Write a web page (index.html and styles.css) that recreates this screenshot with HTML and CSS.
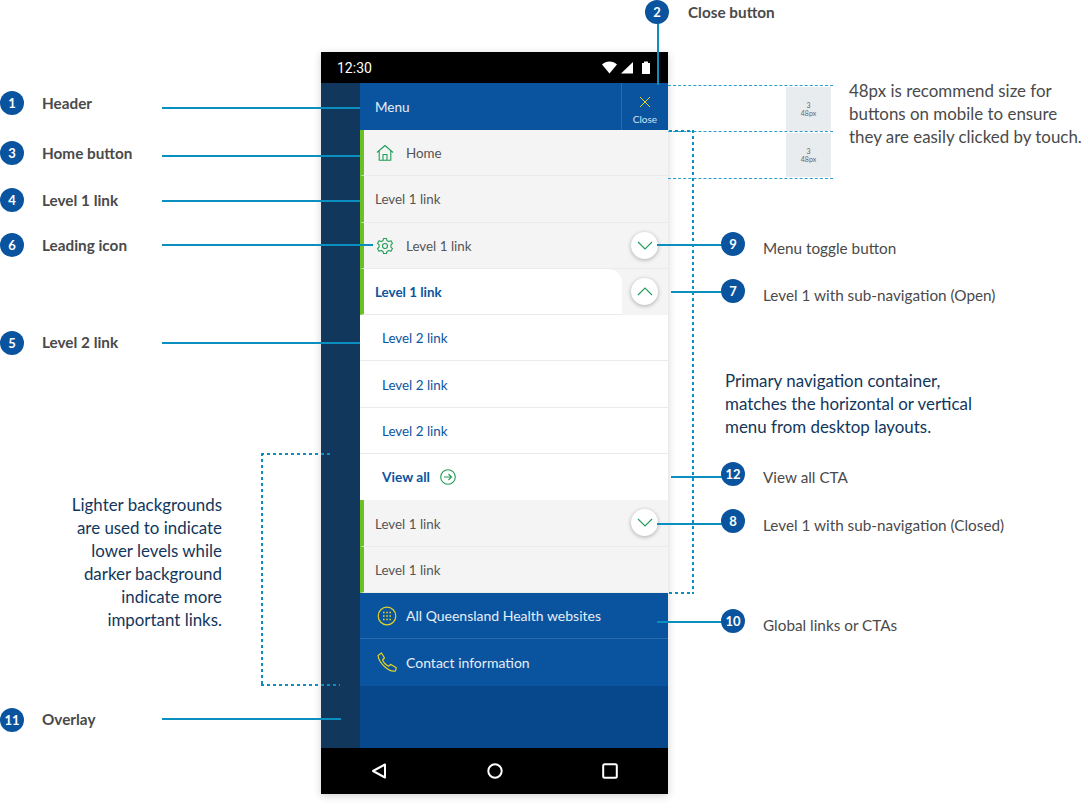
FILE: index.html
```html
<!DOCTYPE html>
<html lang="en">
<head>
    <meta charset="UTF-8">
    <title>Mobile navigation anatomy</title>
    <link rel="stylesheet" href="styles.css">
</head>
<body>
    <div class="canvas">
        <!-- phone -->
        <div class="phone">
            <div class="status-bar">
                <span class="time">12:30</span>
                <svg class="status-icons" width="52" height="14" viewBox="0 0 52 14">
                    <path d="M0 3.500C4-.6 11-.6 15 3.500L7.500 12.500Z" fill="#fff"/>
                    <path d="M19 12.500L31 1V12.500Z" fill="#fff"/>
                    <path d="M40 2H42V0.500H46V2H48V13H40Z" fill="#fff"/>
                </svg>
            </div>
            <div class="screen">
                <div class="overlay"></div>
                <div class="drawer">
                    <div class="drawer-header">
                        <span class="menu-title">Menu</span>
                        <div class="close-btn">
                            <svg width="12" height="12" viewBox="0 0 12 12"><path d="M1 1L11 11M11 1L1 11" stroke="#e3d323" stroke-width="1" fill="none"/></svg>
                            <span>Close</span>
                        </div>
                    </div>
                    <nav class="menu">
                        <a class="row level1">
                            <svg class="lead" width="18" height="18" viewBox="0 0 18 18" fill="none" stroke="#1f9d57" stroke-width="1.100" stroke-linejoin="round"><path d="M1 8.500L9 1.500L17 8.500M3.200 7V16.300H14.800V7"/><path d="M7 16.300V10.500H11V16.300"/></svg>
                            Home
                        </a>
                        <a class="row level1">Level 1 link</a>
                        <a class="row level1">
                            <svg class="lead" width="18" height="18" viewBox="0 0 18 18" fill="none" stroke="#1f9d57" stroke-width="1.100" stroke-linejoin="round"><path d="M7.500 1.500H10.500L11 3.700L12.900 4.600L15 3.800L16.500 6.400L14.900 7.900V10.100L16.500 11.600L15 14.200L12.900 13.400L11 14.400L10.500 16.500H7.500L7 14.400L5.100 13.400L3 14.200L1.500 11.600L3.100 10.100V7.900L1.500 6.400L3 3.800L5.100 4.600L7 3.700Z"/><circle cx="9" cy="9" r="2.500"/></svg>
                            Level 1 link
                            <span class="toggle"><svg width="16" height="9" viewBox="0 0 16 9"><path d="M1 1L8 8L15 1" stroke="#1f9d57" stroke-width="1.100" fill="none"/></svg></span>
                        </a>
                        <div class="row-open">
                            <a class="row level1 open">Level 1 link</a>
                            <span class="toggle"><svg width="16" height="9" viewBox="0 0 16 9"><path d="M1 8L8 1L15 8" stroke="#1f9d57" stroke-width="1.100" fill="none"/></svg></span>
                        </div>
                        <a class="row level2">Level 2 link</a>
                        <a class="row level2">Level 2 link</a>
                        <a class="row level2">Level 2 link</a>
                        <a class="row level2 view-all">
                            View all
                            <svg width="16" height="16" viewBox="0 0 16 16" fill="none" stroke="#1f9d57" stroke-width="1.100"><circle cx="8" cy="8" r="7.300"/><path d="M4 8H11.500M8.500 5L11.500 8L8.500 11"/></svg>
                        </a>
                        <a class="row level1">
                            Level 1 link
                            <span class="toggle"><svg width="16" height="9" viewBox="0 0 16 9"><path d="M1 1L8 8L15 1" stroke="#1f9d57" stroke-width="1.100" fill="none"/></svg></span>
                        </a>
                        <a class="row level1">Level 1 link</a>
                    </nav>
                    <div class="global-links">
                        <a class="global-row">
                            <svg width="20" height="20" viewBox="0 0 20 20" fill="none" stroke="#e3d323"><circle cx="10" cy="10" r="8.800" stroke-width="1.200"/><path d="M6 6.500H14M6 10H14M6 13.500H14" stroke-width="1.600" stroke-dasharray="1.600 1.600"/></svg>
                            All Queensland Health websites
                        </a>
                        <a class="global-row">
                            <svg width="20" height="20" viewBox="0 0 20 20" fill="none" stroke="#e3d323" stroke-width="1.200" stroke-linejoin="round"><path d="M1 3.500L4.500 1L7.500 6L5.500 7.800C6.500 10.500 9 13 11.700 14.200L13.500 12.300L19.300 15.700L18.500 18.800C16 19.500 12 18.500 8 15C4 11.500 1.500 7.500 1 3.500Z"/></svg>
                            Contact information
                        </a>
                    </div>
                    <div class="drawer-fill"></div>
                </div>
            </div>
            <div class="nav-bar">
                <svg width="16" height="16" viewBox="0 0 16 16"><path d="M14 1.500V14.500L2 8Z" fill="none" stroke="#fff" stroke-width="2" stroke-linejoin="round"/></svg>
                <svg width="16" height="16" viewBox="0 0 16 16"><circle cx="8" cy="8" r="6.700" fill="none" stroke="#fff" stroke-width="2"/></svg>
                <svg width="16" height="16" viewBox="0 0 16 16"><rect x="1.200" y="1.200" width="13.600" height="13.600" rx="1.500" fill="none" stroke="#fff" stroke-width="2"/></svg>
            </div>
        </div>

        <!-- leader lines -->
        <div class="line h l-header"></div>
        <div class="line h l-home"></div>
        <div class="line h l-level1"></div>
        <div class="line h l-icon"></div>
        <div class="line h l-level2"></div>
        <div class="line h l-overlay"></div>
        <div class="line v l-close"></div>
        <div class="line h l-toggle"></div>
        <div class="line h l-open"></div>
        <div class="line h l-viewall"></div>
        <div class="line h l-closed"></div>
        <div class="line h l-global"></div>

        <!-- dashed guides -->
        <div class="guide g1"></div>
        <div class="guide g2"></div>
        <div class="guide g3"></div>
        <div class="size-box s1"><span>3</span><span>48px</span></div>
        <div class="size-box s2"><span>3</span><span>48px</span></div>
        <div class="bracket-right"></div>
        <div class="bracket-left"></div>

        <!-- numbered pins -->
        <span class="pin p1">1</span>
        <span class="pin p2">2</span>
        <span class="pin p3">3</span>
        <span class="pin p4">4</span>
        <span class="pin p5">5</span>
        <span class="pin p6">6</span>
        <span class="pin p7">7</span>
        <span class="pin p8">8</span>
        <span class="pin p9">9</span>
        <span class="pin p10">10</span>
        <span class="pin p11">11</span>
        <span class="pin p12">12</span>

        <!-- labels -->
        <span class="label bold t1">Header</span>
        <span class="label bold t2">Close button</span>
        <span class="label bold t3">Home button</span>
        <span class="label bold t4">Level 1 link</span>
        <span class="label bold t5">Level 2 link</span>
        <span class="label bold t6">Leading icon</span>
        <span class="label bold t11">Overlay</span>
        <span class="label t9">Menu toggle button</span>
        <span class="label t7">Level 1 with sub-navigation (Open)</span>
        <span class="label t12">View all CTA</span>
        <span class="label t8">Level 1 with sub-navigation (Closed)</span>
        <span class="label t10">Global links or CTAs</span>

        <p class="note note-size">48px is recommend size for<br>buttons on mobile to ensure<br>they are easily clicked by touch.</p>
        <p class="note note-primary">Primary navigation container,<br>matches the horizontal or vertical<br>menu from desktop layouts.</p>
        <p class="note note-levels">Lighter backgrounds<br>are used to indicate<br>lower levels while<br>darker background<br>indicate more<br>important links.</p>
    </div>
</body>
</html>
```

FILE: styles.css
```css
* {
    box-sizing: border-box;
}

body {
    margin: 0;
    background: #fff;
    font-family: Lato, 'Open Sans', sans-serif;
}

.canvas {
    position: relative;
    width: 1090px;
    height: 809px;
    overflow: hidden;
}

/* phone */
.phone {
    position: absolute;
    left: 321px;
    top: 52px;
    width: 347px;
    height: 742px;
    display: flex;
    flex-direction: column;
    box-shadow: 0 2px 8px rgba(0, 0, 0, 0.18);
}

.status-bar {
    height: 31px;
    background: #000;
    display: flex;
    align-items: center;
    justify-content: space-between;
    padding: 0 14px 0 16px;
    color: #fff;
}

.time {
    font-family: Roboto, sans-serif;
    font-size: 14px;
}

.screen {
    flex: 1;
    display: flex;
    min-height: 0;
}

.overlay {
    width: 39px;
    background: #12375c;
}

.drawer {
    flex: 1;
    display: flex;
    flex-direction: column;
    background: #f4f4f4;
}

.drawer-header {
    height: 47px;
    display: flex;
    align-items: center;
    justify-content: space-between;
    background: #0a549f;
    color: #fff;
    padding-left: 15px;
    font-size: 13.500px;
}

.menu-title {
    color: #e6eef6;
}

.close-btn {
    width: 47px;
    height: 100%;
    border-left: 1px solid #2a6cb0;
    display: flex;
    flex-direction: column;
    align-items: center;
    padding-top: 13px;
    gap: 5px;
    font-size: 10px;
    color: #d5e2ef;
}

.menu {
    display: flex;
    flex-direction: column;
}

.row {
    height: 46.300px;
    display: flex;
    align-items: center;
    position: relative;
    padding-top: 1px;
    font-size: 13.400px;
    border-bottom: 1px solid #ebebeb;
}

.level1 {
    background: #f4f4f4;
    border-left: 4px solid #6cc024;
    padding-left: 11px;
    color: #555;
}

.lead {
    margin-left: 1px;
    margin-right: 12px;
}

.toggle {
    position: absolute;
    right: 10px;
    top: 9px;
    width: 27px;
    height: 27px;
    border-radius: 50%;
    background: #fff;
    box-shadow: 0 1px 4px rgba(0, 0, 0, 0.3);
    display: flex;
    align-items: center;
    justify-content: center;
}

.row-open {
    position: relative;
    height: 46.300px;
    background: #f4f4f4;
}

.open {
    width: 262px;
    background: #fff;
    color: #0a549f;
    font-weight: 700;
    border-top-right-radius: 14px;
}

.level2 {
    background: #fff;
    color: #0a549f;
    padding-left: 22px;
}

.view-all {
    font-size: 13.700px;
    font-weight: 700;
    gap: 10px;
    padding-top: 0;
    padding-bottom: 1px;
    border-bottom: 0;
}

.global-links {
    display: flex;
    flex-direction: column;
}

.global-row {
    height: 46.300px;
    display: flex;
    align-items: center;
    gap: 9px;
    padding-left: 17px;
    background: #0a549f;
    color: #e6eef6;
    font-size: 14px;
    border-bottom: 1px solid #2a6cb0;
}

.global-row:last-child {
    border-bottom: 0;
}

.drawer-fill {
    flex: 1;
    background: #07478c;
}

.nav-bar {
    height: 46px;
    background: #000;
    display: flex;
    align-items: center;
    justify-content: space-between;
    padding: 0 50px;
}

/* leader lines */
.line {
    position: absolute;
    background: #0a8fc0;
}

.line.h {
    height: 2px;
}

.line.v {
    width: 2px;
}

.l-header { left: 162px; top: 107px; width: 198px; }
.l-home { left: 162px; top: 155px; width: 198px; }
.l-level1 { left: 162px; top: 200px; width: 198px; }
.l-icon { left: 162px; top: 244px; width: 211px; }
.l-level2 { left: 162px; top: 342px; width: 198px; }
.l-overlay { left: 162px; top: 718px; width: 179px; }
.l-close { left: 657px; top: 20px; height: 65px; }
.l-toggle { left: 657px; top: 244px; width: 70px; }
.l-open { left: 671px; top: 291px; width: 56px; }
.l-viewall { left: 671px; top: 476px; width: 56px; }
.l-closed { left: 657px; top: 523px; width: 70px; }
.l-global { left: 657px; top: 621px; width: 70px; }

/* dashed guides */
.guide {
    position: absolute;
    left: 668px;
    width: 165px;
    border-top: 1px dashed #2a9fcb;
}

.g1 { top: 85px; }
.g2 { top: 131px; }
.g3 { top: 178px; }

.size-box {
    position: absolute;
    left: 786px;
    width: 45px;
    height: 44px;
    background: #e8ecee;
    display: flex;
    flex-direction: column;
    align-items: center;
    justify-content: center;
    font-size: 7px;
    line-height: 8px;
    color: #666;
}

.s1 { top: 87px; }
.s2 { top: 133px; }

/* brackets use gradients so the dashes stay short (3 on, 3 off) */
.bracket-right,
.bracket-left {
    position: absolute;
    --dash-x: repeating-linear-gradient(90deg, #0a8fc0 0 3px, transparent 3px 6px);
    --dash-y: repeating-linear-gradient(180deg, #0a8fc0 0 3px, transparent 3px 6px);
    background-repeat: no-repeat;
}

.bracket-right {
    left: 669px;
    top: 130px;
    width: 25px;
    height: 464px;
    background-image: var(--dash-x), var(--dash-x), var(--dash-y);
    background-size: 100% 2px, 100% 2px, 2px 100%;
    background-position: top left, bottom left, top right;
}

.bracket-left {
    left: 261px;
    top: 453px;
    width: 79px;
    height: 233px;
    background-image: var(--dash-x), var(--dash-x), var(--dash-y);
    background-size: 72px 2px, 100% 2px, 2px 100%;
    background-position: top left, bottom left, top left;
}

/* numbered pins */
.pin {
    position: absolute;
    width: 24px;
    height: 24px;
    border-radius: 50%;
    background: #0a549f;
    color: #fff;
    font-size: 13px;
    font-weight: 700;
    display: flex;
    align-items: center;
    justify-content: center;
}

.p1 { left: 0; top: 91px; }
.p2 { left: 645px; top: 0; }
.p3 { left: 0; top: 141px; }
.p4 { left: 0; top: 188px; }
.p5 { left: 0; top: 331px; }
.p6 { left: 0; top: 233px; }
.p7 { left: 721px; top: 279px; }
.p8 { left: 721px; top: 509px; }
.p9 { left: 721px; top: 232px; }
.p10 { left: 721px; top: 609px; }
.p11 { left: 0; top: 708px; }
.p12 { left: 721px; top: 462px; }

/* labels */
.label {
    position: absolute;
    font-size: 15.300px;
    line-height: 20px;
    color: #4a4a4a;
    white-space: nowrap;
}

.label.bold {
    font-weight: 700;
}

.t1 { left: 42px; top: 93px; }
.t2 { left: 688px; top: 2px; }
.t3 { left: 42px; top: 143px; }
.t4 { left: 42px; top: 190px; }
.t5 { left: 42px; top: 332px; }
.t6 { left: 42px; top: 235px; }
.t11 { left: 42px; top: 709px; }
.t9 { left: 763px; top: 238px; }
.t7 { left: 763px; top: 285px; }
.t12 { left: 763px; top: 467px; }
.t8 { left: 763px; top: 515px; }
.t10 { left: 763px; top: 615px; }

.note {
    position: absolute;
    margin: 0;
    font-size: 16.900px;
    line-height: 23px;
    white-space: nowrap;
}

.note-size {
    left: 849px;
    top: 79px;
    color: #4a4a4a;
}

.note-primary {
    left: 725px;
    top: 369px;
    color: #12375c;
}

.note-levels {
    right: 868px;
    top: 493px;
    text-align: right;
    color: #12375c;
}
```
